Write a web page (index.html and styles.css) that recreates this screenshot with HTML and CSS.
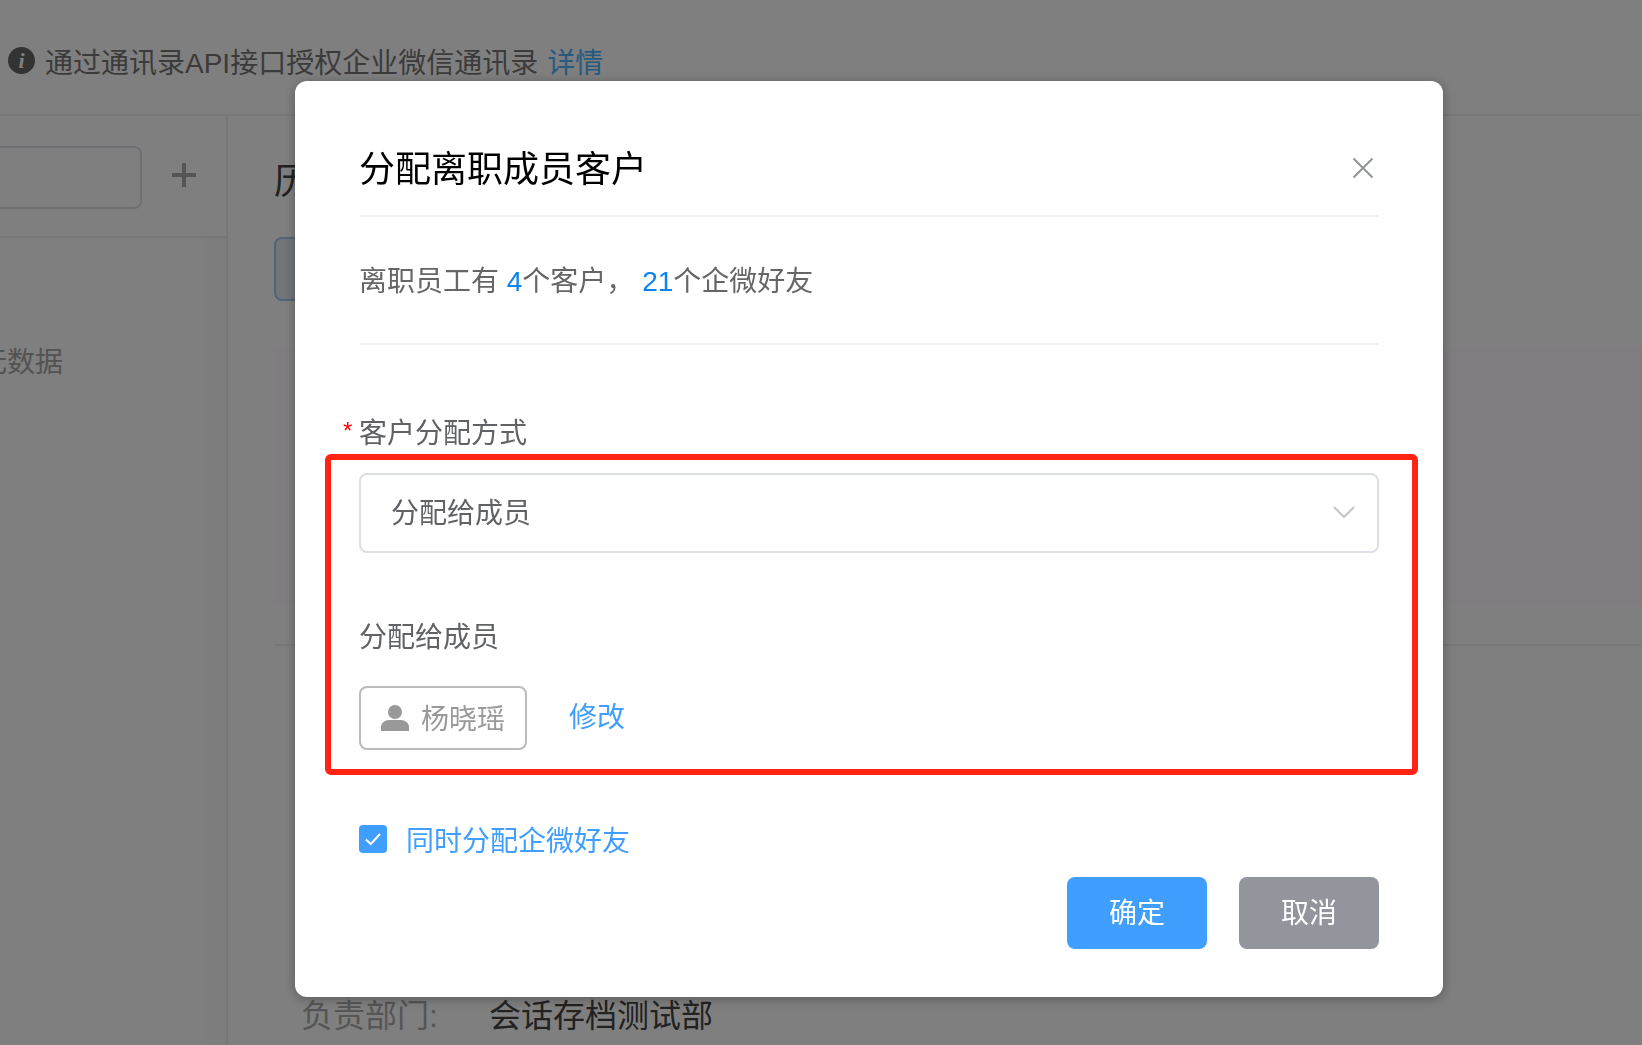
FILE: index.html
```html
<!DOCTYPE html>
<html lang="zh-CN">
<head>
<meta charset="utf-8">
<title>分配离职成员客户</title>
<link rel="stylesheet" href="styles.css">
</head>
<body>
<div class="page">
  <div class="notice">
    <span class="info-dot">i</span>
    <span class="notice-text">通过通讯录API接口授权企业微信通讯录</span>
    <a class="notice-link">详情</a>
  </div>
  <div class="main">
    <aside class="sidebar">
      <div class="side-top">
        <div class="side-input"></div>
        <span class="side-plus"></span>
      </div>
      <div class="side-list">
        <span class="side-empty">无数据</span>
        <div class="side-track"></div>
      </div>
    </aside>
    <section class="content">
      <h2 class="content-title">历史数据</h2>
      <div class="content-btn"></div>
      <div class="table-head"></div>
      <div class="table-row"></div>
      <div class="meta">
        <span class="meta-label">负责部门:</span>
        <span class="meta-value">会话存档测试部</span>
      </div>
    </section>
  </div>
</div>

<div class="mask">
  <div class="modal">
    <div class="modal-head">
      <span class="modal-title">分配离职成员客户</span>
      <svg class="modal-close" width="22" height="22" viewBox="0 0 22 22"><path d="M1.5 1.5 20.5 20.5M20.5 1.5 1.5 20.5" fill="none" stroke="#909399" stroke-width="2"/></svg>
    </div>
    <div class="summary">离职员工有 <em class="num">4</em>个客户， <em class="num">21</em>个企微好友</div>
    <div class="field-label first"><span class="star">*</span>客户分配方式</div>
    <div class="select">
      <span class="select-value">分配给成员</span>
      <svg class="select-arrow" width="22" height="12" viewBox="0 0 22 12"><path d="M1 1 11 11 21 1" fill="none" stroke="#c0c4cc" stroke-width="2"/></svg>
    </div>
    <div class="field-label second">分配给成员</div>
    <div class="member-row">
      <div class="member-tag">
        <svg width="28" height="26" viewBox="0 0 28 26"><circle cx="14" cy="7" r="7" fill="#999"/><path d="M0 26v-4c0-4 4-7 8-7h12c4 0 8 3 8 7v4z" fill="#999"/></svg>
        <span class="member-name">杨晓瑶</span>
      </div>
      <a class="member-edit">修改</a>
    </div>
    <label class="check">
      <span class="check-box"><svg width="18" height="14" viewBox="0 0 18 14"><path d="M2 7.5 6.8 12 16 2" fill="none" stroke="#fff" stroke-width="2"/></svg></span>
      <span class="check-text">同时分配企微好友</span>
    </label>
    <div class="actions">
      <button class="btn btn-primary">确定</button>
      <button class="btn btn-muted">取消</button>
    </div>
    <div class="red-frame"></div>
  </div>
</div>
</body>
</html>
```

FILE: styles.css
```css
* { box-sizing: border-box; }
html, body { margin: 0; padding: 0; height: 100%; overflow: hidden; }
body {
  font-family: "Liberation Sans", "Noto Sans CJK SC", sans-serif;
  font-size: 28px;
  font-weight: 400;
  background: #fff;
}

/* page underneath the mask */
.page { height: 1045px; overflow: hidden; background: #fff; }
.notice {
  height: 116px;
  padding: 6px 0 0 8px;
  display: flex;
  align-items: center;
  border-bottom: 2px solid #efefef;
  color: #777;
}
.info-dot {
  width: 27px;
  height: 27px;
  margin-right: 10px;
  border-radius: 50%;
  background: #666;
  color: #fff;
  font: italic bold 22px/27px "Liberation Serif", serif;
  text-align: center;
}
.notice-text { margin-top: 1px; }
.notice-link { margin: 1px 0 0 9px; color: #4cb4ff; }

.main { display: flex; height: 929px; }
.sidebar { width: 228px; flex: none; border-right: 2px solid #efefef; display: flex; flex-direction: column; }
.side-top {
  height: 122px;
  padding-top: 30px;
  display: flex;
  align-items: flex-start;
  border-bottom: 2px solid #efefef;
}
.side-input {
  width: 160px;
  height: 63px;
  margin-left: -18px;
  border: 2px solid #dcdfe6;
  border-radius: 8px;
}
.side-plus {
  width: 24px;
  height: 24px;
  margin: 17px 0 0 30px;
  background:
    linear-gradient(#aaa, #aaa) center / 100% 4px no-repeat,
    linear-gradient(#aaa, #aaa) center / 4px 100% no-repeat;
}
.side-list { flex: 1; position: relative; display: flex; }
.side-empty { margin: 104px 0 0 -21px; line-height: 42px; height: 42px; color: #a6a6a6; white-space: nowrap; }
.side-track { position: absolute; top: 0; right: 0; bottom: 0; width: 22px; background: #fbfbfb; }

.content { flex: 1; padding-left: 46px; display: flex; flex-direction: column; min-width: 0; }
.content-title { margin: 41px 0 0; height: 50px; font-size: 36px; line-height: 50px; font-weight: 400; color: #444; }
.content-btn {
  width: 160px;
  height: 64px;
  margin-top: 30px;
  border: 2px solid #a9c8ef;
  border-radius: 8px;
  background: #e4ecf5;
}
.table-head { height: 256px; margin-top: 47px; background: #fefafe; }
.table-row { height: 42px; border-bottom: 2px solid #efefef; }
.meta { margin: 347px 0 0 27px; display: flex; font-size: 32px; line-height: 46px; white-space: nowrap; }
.meta-label { width: 188px; color: #ababab; }
.meta-value { color: #444; }

/* mask and dialog */
.mask {
  position: fixed;
  inset: 0;
  background: rgba(0, 0, 0, .5);
  padding: 81px 0 0 295px;
}
.modal {
  position: relative;
  width: 1148px;
  height: 916px;
  padding: 0 64px;
  border-radius: 12px;
  background: #fff;
  box-shadow: 0 2px 12px rgba(0, 0, 0, .3);
}
.modal-head {
  height: 136px;
  padding-top: 69px;
  display: flex;
  align-items: flex-start;
  justify-content: space-between;
  border-bottom: 2px solid #f2f2f4;
}
.modal-title { font-size: 36px; line-height: 40px; color: #000; }
.modal-close { margin: 7px 5px 0 0; }
.summary {
  height: 128px;
  padding-top: 45px;
  line-height: 40px;
  color: #666;
  border-bottom: 2px solid #f2f2f4;
}
.num { font-style: normal; color: #0a84ee; }
.field-label { line-height: 40px; color: #606266; }
.field-label.first { margin-top: 69px; }
.field-label.second { margin-top: 65px; }
.star { display: inline-block; width: 16px; margin-left: -16px; color: #f00; font-size: 24px; vertical-align: 4px; line-height: 20px; }
.select {
  height: 80px;
  margin-top: 19px;
  padding: 0 22px 0 30px;
  display: flex;
  align-items: center;
  justify-content: space-between;
  border: 2px solid #dcdfe6;
  border-radius: 8px;
  color: #606266;
}
.select-value { margin-bottom: 5px; }
.select-arrow { margin-bottom: 2px; }
.member-row { margin-top: 28px; display: flex; align-items: center; }
.member-tag {
  width: 168px;
  height: 64px;
  padding-left: 20px;
  display: flex;
  align-items: center;
  gap: 12px;
  border: 2px solid #bbb;
  border-radius: 8px;
  color: #999;
}
.member-name { margin-bottom: 2px; }
.member-edit { margin: 0 0 6px 42px; color: #409eff; }
.check { margin-top: 75px; height: 28px; display: flex; align-items: center; gap: 19px; color: #409eff; }
.check-box {
  width: 28px;
  height: 28px;
  display: flex;
  align-items: center;
  justify-content: center;
  border-radius: 4px;
  background: #409eff;
}
.actions { margin-top: 24px; display: flex; justify-content: flex-end; gap: 32px; }
.btn {
  width: 140px;
  height: 72px;
  padding: 0 0 4px;
  border: 0;
  border-radius: 8px;
  color: #fff;
  font: inherit;
}
.btn-primary { background: #409eff; }
.btn-muted { background: #92959c; }
.red-frame {
  position: absolute;
  left: 30px;
  top: 373px;
  width: 1093px;
  height: 321px;
  border: 6px solid #ff2414;
  border-radius: 6px;
  pointer-events: none;
}
```
